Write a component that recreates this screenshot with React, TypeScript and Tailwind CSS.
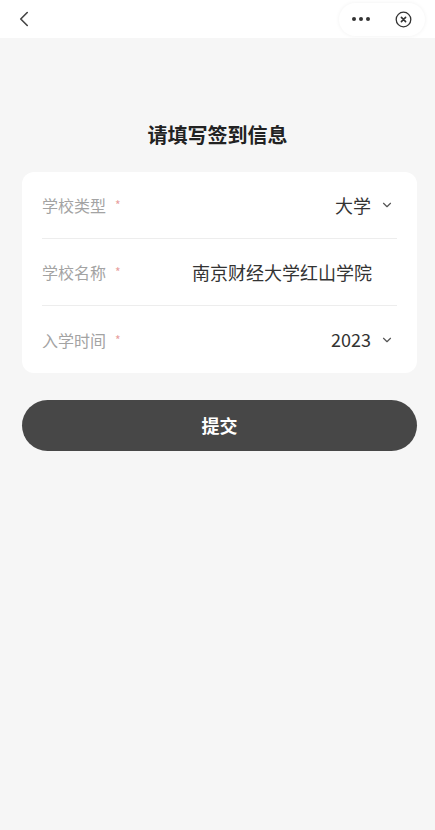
import { ChevronDown, ChevronLeft } from 'lucide-react';

const font = { fontFamily: '"Noto Sans CJK SC", "Noto Sans", sans-serif' };

function Row({ label, value, arrow = true, last = false }: { label: string; value: string; arrow?: boolean; last?: boolean }) {
  return (
    <div className={`mx-[20px] flex h-[67px] items-center justify-between ${last ? '' : 'border-b border-[#ededed]'}`}>
      <div className="flex items-center text-[16px] text-[#a3a3a3]">
        {label}
        <span className="ml-[9px] text-[12px] text-[#e8a0a0]">*</span>
      </div>
      <div className="mr-[3px] flex items-center text-[18px] text-[#333]">
        <span className={arrow ? '' : 'mr-[22px]'}>{value}</span>
        {arrow && <ChevronDown className="ml-[9px] h-[14px] w-[14px] text-[#555]" strokeWidth={2} />}
      </div>
    </div>
  );
}

export default function App() {
  return (
    <div className="flex h-[830px] w-[435px] flex-col bg-[#f6f6f6]" style={font}>
      {/* top bar */}
      <div className="flex h-[38px] items-center justify-between bg-white pl-[11px] pr-[10px]">
        <ChevronLeft className="h-[26px] w-[26px] text-[#444]" strokeWidth={1.5} />
        <div className="flex h-[33px] w-[86px] items-center justify-around rounded-full bg-white shadow-[0_0_4px_rgba(0,0,0,0.06)]">
          <span className="flex gap-[3px]">
            <span className="h-[4px] w-[4px] rounded-full bg-[#333]" />
            <span className="h-[4px] w-[4px] rounded-full bg-[#333]" />
            <span className="h-[4px] w-[4px] rounded-full bg-[#333]" />
          </span>
          <svg width="17" height="17" viewBox="0 0 17 17">
            <circle cx="8.5" cy="8.5" r="7.3" fill="none" stroke="#333" strokeWidth="1.3" />
            <path d="M6.4 6.4 L10.6 10.6 M10.6 6.4 L6.4 10.6" stroke="#333" strokeWidth="1.6" strokeLinecap="round" />
          </svg>
        </div>
      </div>

      <h1 className="mt-[82px] text-center text-[20px] font-bold text-[#222]">请填写签到信息</h1>

      <div className="ml-[22px] mr-[18px] mt-[22px] rounded-[12px] bg-white">
        <Row label="学校类型" value="大学" />
        <Row label="学校名称" value="南京财经大学红山学院" arrow={false} />
        <Row label="入学时间" value="2023" last />
      </div>

      <button className="ml-[22px] mr-[18px] mt-[27px] h-[51px] rounded-full bg-[#474747] text-[18px] font-bold text-white">
        提交
      </button>
    </div>
  );
}
